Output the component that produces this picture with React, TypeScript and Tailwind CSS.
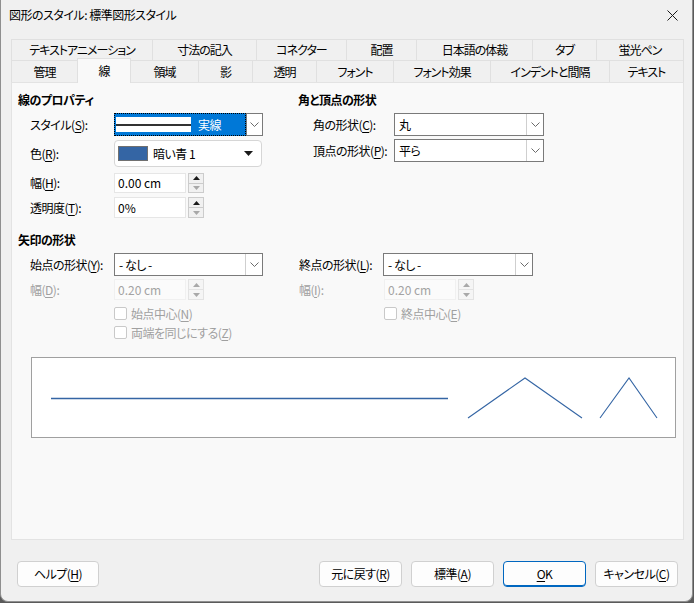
import React from "react";

const FONT = "font-['Noto_Sans_CJK_JP','Noto_Sans',sans-serif] [font-feature-settings:'palt'] tracking-[-0.5px]";

function Chevron() {
  return (
    <svg width="9" height="5" viewBox="0 0 9 5">
      <polyline points="0.5,0.5 4.5,4.5 8.5,0.5" fill="none" stroke="#6b6b6b" strokeWidth="1" />
    </svg>
  );
}

function Tri({ up, color }: { up: boolean; color: string }) {
  return (
    <svg width="7" height="4" viewBox="0 0 7 4">
      {up ? <polygon points="0,4 7,4 3.5,0" fill={color} /> : <polygon points="0,0 7,0 3.5,4" fill={color} />}
    </svg>
  );
}

function Combo({ text, w = "w-[150px]" }: { text: string; w?: string }) {
  return (
    <div className={`flex h-[23px] ${w} border border-[#7a7a7a] bg-white`}>
      <div className="flex flex-1 items-center pl-[4px] text-[12px] leading-[16px] text-black">{text}</div>
      <div className="flex w-[17px] items-center justify-center border-l border-[#cfcfcf]">
        <Chevron />
      </div>
    </div>
  );
}

function Spinner({ value, disabled, h = "h-[21px]" }: { value: string; disabled?: boolean; h?: string }) {
  return (
    <div className={`flex ${h} gap-[2px]`}>
      <div
        className={`flex w-[72px] items-center pl-[3px] text-[12px] leading-[16px] tracking-normal ${
          disabled ? "bg-[#fbfbfb] text-[#a3a3a3] border border-[#f0f0f0]" : "bg-white text-black border border-[#e6e6e6]"
        }`}
      >
        {value}
      </div>
      <div className="flex w-[16px] flex-col">
        <div className={`flex flex-1 items-center justify-center border ${disabled ? "border-[#e3e3e3] bg-[#f5f5f5]" : "border-[#cccccc] bg-[#f1f1f1]"}`}>
          <Tri up color={disabled ? "#a8a8a8" : "#1a1a1a"} />
        </div>
        <div className={`flex flex-1 items-center justify-center border border-t-0 ${disabled ? "border-[#e3e3e3] bg-[#f5f5f5]" : "border-[#cccccc] bg-[#f1f1f1]"}`}>
          <Tri up={false} color="#a8a8a8" />
        </div>
      </div>
    </div>
  );
}

function Check({ children }: { children: React.ReactNode }) {
  return (
    <div className="flex h-[19px] items-center">
      <div className="h-[13px] w-[13px] rounded-[2px] border border-[#c9c9c9] bg-white" />
      <span className="ml-[4px] text-[12px] leading-[16px] text-[#a0a0a0]">{children}</span>
    </div>
  );
}

function Btn({ children, primary, w = "w-[83px]" }: { children: React.ReactNode; primary?: boolean; w?: string }) {
  return (
    <div
      className={`flex h-[26px] ${w} items-center justify-center rounded-[4px] bg-[#fdfdfd] text-[12px] leading-[16px] text-black ${
        primary ? "border border-[#0067c0] shadow-[inset_0_-1px_0_#0067c0]" : "border border-[#d0d0d0]"
      }`}
    >
      {children}
    </div>
  );
}

const row1 = [
  ["テキストアニメーション", "w-[141px]"],
  ["寸法の記入", "w-[104px]"],
  ["コネクター", "w-[90px]"],
  ["配置", "w-[70px]"],
  ["日本語の体裁", "w-[116px]"],
  ["タブ", "w-[64px]"],
  ["蛍光ペン", "w-[88px]"],
];

const row2 = [
  ["管理", "w-[66px]"],
  ["線", "w-[54px]"],
  ["領域", "w-[67px]"],
  ["影", "w-[54px]"],
  ["透明", "w-[64px]"],
  ["フォント", "w-[77px]"],
  ["フォント効果", "w-[97px]"],
  ["インデントと間隔", "w-[119px]"],
  ["テキスト", "w-[75px]"],
];

function U({ c }: { c: string }) {
  return <span className="underline underline-offset-[2px] decoration-[1px]">{c}</span>;
}

export default function App() {
  return (
    <div className={`h-[603px] w-[694px] overflow-hidden bg-[#5a5a5a] ${FONT}`}>
      <div className="h-[602px] w-[693px] rounded-b-[8px] border-l border-r border-b border-[#8f8f8f] bg-[#f0f0f0]">
        {/* title bar */}
        <div className="flex h-[30px] items-center pl-[8px] pr-[10px]">
          <span className="text-[12px] leading-[16px] text-black">図形のスタイル: 標準図形スタイル</span>
          <div className="ml-auto flex h-[30px] w-[20px] items-center justify-center">
            <svg width="11" height="11" viewBox="0 0 11 11">
              <line x1="0.5" y1="0.5" x2="10.5" y2="10.5" stroke="#1a1a1a" strokeWidth="1" />
              <line x1="10.5" y1="0.5" x2="0.5" y2="10.5" stroke="#1a1a1a" strokeWidth="1" />
            </svg>
          </div>
        </div>

        {/* tabs */}
        <div className="ml-[10px] mt-[9px] flex h-[21px] tracking-[-1px]">
          {row1.map(([t, w], i) => (
            <div
              key={t}
              className={`flex ${w} items-center justify-center border-t border-l border-[#e0e0e0] bg-[#f0f0f0] text-[12px] leading-[16px] text-black ${
                i === row1.length - 1 ? "border-r" : ""
              }`}
            >
              {t}
            </div>
          ))}
        </div>
        <div className="ml-[10px] flex h-[22px] items-end tracking-[-1px]">
          {row2.map(([t, w], i) =>
            t === "線" ? (
              <div
                key={t}
                className={`relative z-10 -mb-[1px] flex h-[25px] ${w} items-center justify-center border-t border-l border-r border-[#e0e0e0] bg-[#f9f9f9] pb-[1px] text-[12px] leading-[16px] text-black`}
              >
                {t}
              </div>
            ) : (
              <div
                key={t}
                className={`flex h-[22px] ${w} items-center justify-center border-t border-[#e0e0e0] bg-[#f0f0f0] text-[12px] leading-[16px] text-black ${
                  i === row2.length - 1 ? "border-r" : ""
                } ${i === 0 || row2[i - 1][0] !== "線" ? "border-l" : ""}`}
              >
                {t}
              </div>
            )
          )}
        </div>

        {/* panel */}
        <div className="ml-[10px] h-[458px] w-[673px] border border-[#e3e3e3] bg-[#f9f9f9] pl-[6px] pt-[9px] text-[12px] leading-[16px] text-black">
          <div className="flex">
            {/* left */}
            <div className="w-[280px]">
              <div className="h-[16px] font-bold">線のプロパティ</div>
              <div className="mt-[5px] flex h-[23px] items-center pl-[12px]">
                <div className="w-[84px]">
                  スタイル(<U c="S" />):
                </div>
                <div className="flex h-[23px] w-[149px]">
                  <div className="flex flex-1 items-center border border-dotted border-black bg-[#0078d7] pl-[1px]">
                    <div className="flex h-[15px] w-[75px] items-center bg-white">
                      <div className="h-[2px] w-full bg-[#333333]" />
                    </div>
                    <span className="ml-[7px] text-white">実線</span>
                  </div>
                  <div className="flex w-[17px] items-center justify-center border border-[#7a7a7a] bg-white">
                    <Chevron />
                  </div>
                </div>
              </div>
              <div className="mt-[4px] flex h-[27px] items-center pl-[12px]">
                <div className="w-[84px]">
                  色(<U c="R" />):
                </div>
                <div className="flex h-[27px] w-[148px] items-center rounded-[4px] border border-[#d6d6d6] bg-white pl-[3px] pr-[8px]">
                  <div className="h-[15px] w-[30px] border border-[#707070] bg-[#3465a4]" />
                  <span className="ml-[5px]">暗い青 1</span>
                  <div className="ml-auto">
                    <svg width="9" height="5" viewBox="0 0 9 5">
                      <polygon points="0,0 9,0 4.5,5" fill="#1a1a1a" />
                    </svg>
                  </div>
                </div>
              </div>
              <div className="mt-[6px] flex h-[20px] items-center pl-[12px]">
                <div className="w-[84px]">
                  幅(<U c="H" />):
                </div>
                <Spinner value="0.00 cm" h="h-[20px]" />
              </div>
              <div className="mt-[4px] flex h-[21px] items-center pl-[12px]">
                <div className="w-[84px]">
                  透明度(<U c="T" />):
                </div>
                <Spinner value="0%" />
              </div>
            </div>
            {/* right */}
            <div className="w-[300px]">
              <div className="h-[16px] font-bold">角と頂点の形状</div>
              <div className="mt-[5px] flex h-[23px] items-center pl-[15px]">
                <div className="w-[81px]">
                  角の形状(<U c="C" />):
                </div>
                <Combo text="丸" />
              </div>
              <div className="mt-[3px] flex h-[23px] items-center pl-[15px]">
                <div className="w-[81px]">
                  頂点の形状(<U c="P" />):
                </div>
                <Combo text="平ら" />
              </div>
            </div>
          </div>

          {/* arrows */}
          <div className="mt-[14px] h-[16px] font-bold">矢印の形状</div>
          <div className="mt-[5px] flex">
            <div className="w-[281px] pl-[12px]">
              <div className="flex h-[23px] items-center">
                <div className="w-[84px]">
                  始点の形状(<U c="Y" />):
                </div>
                <Combo text="- なし -" w="w-[149px]" />
              </div>
              <div className="mt-[3px] flex h-[21px] items-center text-[#a0a0a0]">
                <div className="w-[84px]">
                  幅(<U c="D" />):
                </div>
                <Spinner value="0.20 cm" disabled />
              </div>
              <div className="mt-[4px] pl-[84px]">
                <Check>
                  始点中心(<U c="N" />)
                </Check>
                <Check>
                  両端を同じにする(<U c="Z" />)
                </Check>
              </div>
            </div>
            <div className="w-[300px]">
              <div className="flex h-[23px] items-center">
                <div className="w-[84px]">
                  終点の形状(<U c="L" />):
                </div>
                <Combo text="- なし -" />
              </div>
              <div className="mt-[3px] flex h-[21px] items-center text-[#a0a0a0]">
                <div className="w-[85px]">
                  幅(<U c="I" />):
                </div>
                <Spinner value="0.20 cm" disabled />
              </div>
              <div className="mt-[4px] pl-[85px]">
                <Check>
                  終点中心(<U c="E" />)
                </Check>
              </div>
            </div>
          </div>

          {/* preview */}
          <div className="ml-[13px] mt-[15px] h-[81px] w-[645px] border border-[#a0a0a0] bg-white">
            <svg width="643" height="79" viewBox="0 0 643 79">
              <line x1="19" y1="40.5" x2="416" y2="40.5" stroke="#3465a4" strokeWidth="1.3" />
              <polyline points="436,60 493,20 550,60" fill="none" stroke="#3465a4" strokeWidth="1.1" />
              <polyline points="568,60 597,20 625,60" fill="none" stroke="#3465a4" strokeWidth="1.1" />
            </svg>
          </div>
        </div>

        {/* buttons */}
        <div className="mt-[21px] flex pl-[16px] pr-[14px]">
          <Btn w="w-[82px]">
            ヘルプ(<U c="H" />)
          </Btn>
          <div className="ml-auto flex gap-[9px]">
            <Btn>
              元に戻す(<U c="R" />)
            </Btn>
            <Btn>
              標準(<U c="A" />)
            </Btn>
            <Btn primary>
              <U c="O" />K
            </Btn>
            <Btn>
              キャンセル(<U c="C" />)
            </Btn>
          </div>
        </div>
      </div>
    </div>
  );
}
